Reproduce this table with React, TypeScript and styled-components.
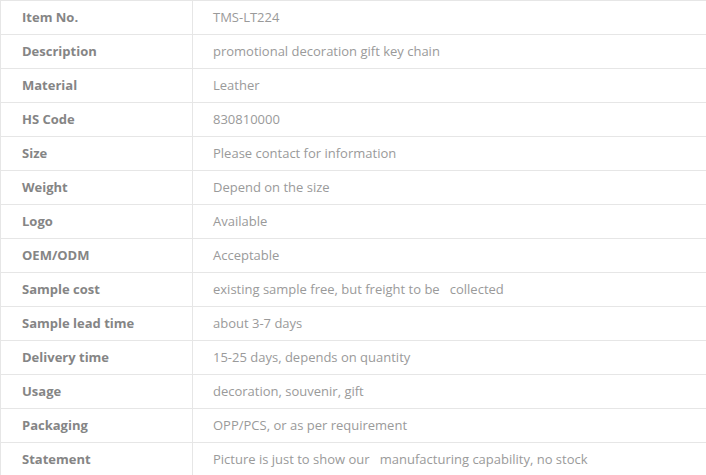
import React from "react";
import styled, { createGlobalStyle } from "styled-components";

const Global = createGlobalStyle`
  html, body { margin: 0; padding: 0; background: #fff; }
  body { font-family: "Open Sans", "DejaVu Sans", sans-serif; overflow: hidden; }
`;

const Table = styled.table`
  border-collapse: collapse;
  width: 100%;
  table-layout: fixed;
  font-size: 13px;
`;

const Row = styled.tr`
  height: 34px;
`;

const Cell = styled.td<{ $label?: boolean }>`
  border: 1px solid #e6e6e6;
  padding: 0 0 2px ${(p) => (p.$label ? "21px" : "20px")};
  height: 33px;
  box-sizing: border-box;
  width: ${(p) => (p.$label ? "192px" : "auto")};
  color: ${(p) => (p.$label ? "#858585" : "#9a9a9a")};
  font-weight: ${(p) => (p.$label ? 700 : 400)};
  white-space: pre;
  vertical-align: middle;
  line-height: 18px;
  &:last-child { border-right: none; }
`;

const rows: [string, string][] = [
  ["Item No.", "TMS-LT224"],
  ["Description", "promotional decoration gift key chain"],
  ["Material", "Leather"],
  ["HS Code", "830810000"],
  ["Size", "Please contact for information"],
  ["Weight", "Depend on the size"],
  ["Logo", "Available"],
  ["OEM/ODM", "Acceptable"],
  ["Sample cost", "existing sample free, but freight to be   collected"],
  ["Sample lead time", "about 3-7 days"],
  ["Delivery time", "15-25 days, depends on quantity"],
  ["Usage", "decoration, souvenir, gift"],
  ["Packaging", "OPP/PCS, or as per requirement"],
  ["Statement", "Picture is just to show our   manufacturing capability, no stock"],
];

export default function App() {
  return (
    <>
      <Global />
      <Table>
        <tbody>
          {rows.map(([k, v]) => (
            <Row key={k}>
              <Cell $label>{k}</Cell>
              <Cell>{v}</Cell>
            </Row>
          ))}
        </tbody>
      </Table>
    </>
  );
}
